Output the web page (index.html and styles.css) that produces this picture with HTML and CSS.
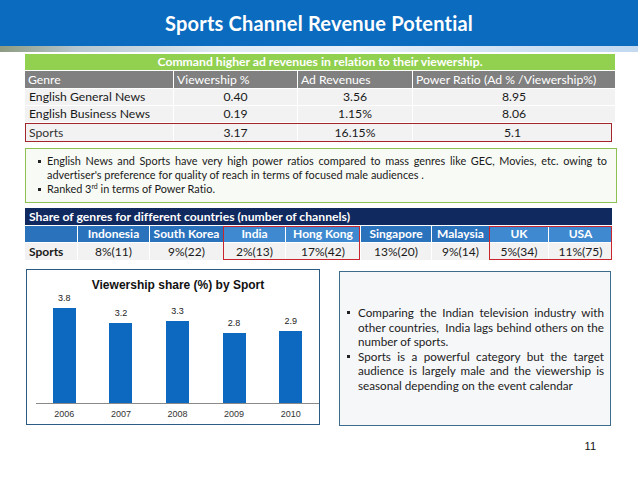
FILE: index.html
```html
<!DOCTYPE html>
<html>
<head>
<meta charset="utf-8">
<link rel="stylesheet" href="styles.css">
</head>
<body>
<header class="banner"><h1>Sports Channel Revenue Potential</h1></header>
<div class="strip"></div>
<main class="content">
  <section class="t1">
    <div class="t1-cap">Command higher ad revenues in relation to their viewership.</div>
    <div class="t1-row t1-head"><div>Genre</div><div>Viewership %</div><div>Ad Revenues</div><div>Power Ratio (Ad % /Viewership%)</div></div>
    <div class="t1-row"><div class="l">English General News</div><div>0.40</div><div>3.56</div><div>8.95</div></div>
    <div class="t1-row"><div class="l">English Business News</div><div>0.19</div><div>1.15%</div><div>8.06</div></div>
    <div class="t1-row hl"><div class="l">Sports</div><div>3.17</div><div>16.15%</div><div>5.1</div></div>
  </section>

  <section class="notes">
    <ul>
      <li>English News and Sports have very high power ratios compared to mass genres like GEC, Movies, etc. owing to advertiser's preference for quality of reach in terms of focused male audiences .</li>
      <li>Ranked 3<sup>rd</sup> in terms of Power Ratio.</li>
    </ul>
  </section>

  <section class="t2">
    <div class="t2-cap">Share of genres for different countries (number of channels)</div>
    <div class="t2-body">
      <div class="grp"><div class="col w-lab"><div class="h"></div><div class="d lab">Sports</div></div></div>
      <div class="grp"><div class="col w-ind"><div class="h">Indonesia</div><div class="d">8%(11)</div></div></div>
      <div class="grp"><div class="col w-kor"><div class="h">South Korea</div><div class="d">9%(22)</div></div></div>
      <div class="grp mark">
        <div class="col w-india"><div class="h">India</div><div class="d">2%(13)</div></div>
        <div class="col w-hk"><div class="h">Hong Kong</div><div class="d">17%(42)</div></div>
      </div>
      <div class="grp"><div class="col w-sg"><div class="h">Singapore</div><div class="d">13%(20)</div></div></div>
      <div class="grp"><div class="col w-my"><div class="h">Malaysia</div><div class="d">9%(14)</div></div></div>
      <div class="grp mark">
        <div class="col w-uk"><div class="h">UK</div><div class="d">5%(34)</div></div>
        <div class="col w-usa"><div class="h">USA</div><div class="d">11%(75)</div></div>
      </div>
    </div>
  </section>

  <section class="bottom">
    <div class="chart">
      <div class="chart-title">Viewership share (%) by Sport</div>
      <div class="plot">
        <div class="bcol"><span class="val">3.8</span><div class="bar" style="height:95px"></div></div>
        <div class="bcol"><span class="val">3.2</span><div class="bar" style="height:80px"></div></div>
        <div class="bcol"><span class="val">3.3</span><div class="bar" style="height:82.5px"></div></div>
        <div class="bcol"><span class="val">2.8</span><div class="bar" style="height:70px"></div></div>
        <div class="bcol"><span class="val">2.9</span><div class="bar" style="height:72.5px"></div></div>
      </div>
      <div class="years"><span>2006</span><span>2007</span><span>2008</span><span>2009</span><span>2010</span></div>
    </div>
    <div class="note2">
      <ul>
        <li>Comparing the Indian television industry with other countries,&nbsp; India lags behind others on the number of sports.</li>
        <li>Sports is a powerful category but the target audience is largely male and the viewership is seasonal depending on the event calendar</li>
      </ul>
    </div>
  </section>
</main>
<footer class="pnum">11</footer>
</body>
</html>
```

FILE: styles.css
```css
* { box-sizing: border-box; }
html, body { margin: 0; padding: 0; }
body {
  width: 638px;
  height: 479px;
  background: #ffffff;
  font-family: Lato, "Open Sans", sans-serif;
  font-variant-ligatures: none;
  color: #1a1a1a;
  overflow: hidden;
}

.banner {
  height: 46px;
  background: #0b6cbf;
  display: flex;
  align-items: center;
  justify-content: center;
}
.banner h1 {
  margin: 0;
  color: #ffffff;
  font-size: 20px;
  font-weight: 700;
  letter-spacing: 0.2px;
}
.strip {
  height: 6px;
  background: linear-gradient(to right, #8e9b80 0%, #b5c6cf 12%, #dfeaf5 35%, #e8f0f9 55%, #cfe1f3 80%, #c3d9f0 100%);
}

.content {
  padding: 2px 23px 0 25px;
}

/* Table 1 */
.t1 { width: 590px; }
.t1-cap {
  height: 16px;
  background: #92d050;
  color: #ffffff;
  font-weight: 700;
  font-size: 12.2px;
  line-height: 16px;
  text-align: center;
}
.t1-row {
  display: grid;
  grid-template-columns: 148px 124px 115px 203px;
  margin-top: 1px;
  height: 16px;
  font-size: 12.2px;
  line-height: 16px;
}
.t1-row > div {
  background: #f2f2f2;
  text-align: center;
  border-left: 1px solid #ffffff;
  white-space: nowrap;
}
.t1-row > div:first-child { border-left: 0; }
.t1-row .l { text-align: left; padding-left: 4px; }
.t1-head { height: 17px; line-height: 17px; }
.t1-head > div {
  background: #808080;
  color: #ffffff;
  text-align: left;
  padding-left: 3px;
}
.t1-row.hl {
  height: 19px;
  line-height: 19px;
  outline: 1px solid #a3262d;
  outline-offset: -1px;
  margin-right: 3px;
  grid-template-columns: 148px 124px 115px 200px;
}
.t1-row.hl .l { color: #333333; }

/* Notes box */
.notes {
  margin-top: 6px;
  width: 592px;
  border: 1px solid #8cc152;
  background: #f8faf5;
  padding: 5px 9px 6px 12px;
}
.notes ul, .note2 ul { list-style: none; margin: 0; padding: 0; }
.notes li {
  position: relative;
  padding-left: 9px;
  font-size: 10.9px;
  line-height: 14px;
  text-align: justify;
}
.notes li::before, .note2 li::before {
  content: "";
  position: absolute;
  left: 0;
  top: 6px;
  width: 3px;
  height: 3px;
  background: #222222;
}
sup { font-size: 7px; line-height: 0; vertical-align: 4px; }

/* Table 2 */
.t2 { margin-top: 5px; width: 587px; }
.t2-cap {
  height: 17px;
  background: #10295e;
  color: #ffffff;
  font-weight: 700;
  font-size: 12.2px;
  line-height: 17px;
  padding-left: 4px;
}
.t2-body { display: flex; margin-top: 1px; }
.grp { display: flex; }
.grp.mark { outline: 1px solid #c9252d; outline-offset: -1px; }
.col { display: flex; flex-direction: column; }
.col .h {
  height: 16px;
  background: #2b72bd;
  color: #ffffff;
  font-weight: 700;
  font-size: 12px;
  line-height: 16px;
  text-align: center;
  border-left: 1px solid #ffffff;
  white-space: nowrap;
}
.grp.mark .col .h { background: #3e89d0; }
.col .d {
  height: 17px;
  margin-top: 1px;
  background: #f2f2f2;
  font-size: 12px;
  line-height: 17px;
  text-align: center;
  border-left: 1px solid #ffffff;
}
.w-lab .h, .w-lab .d { border-left: 0; }
.col .d.lab { text-align: left; font-weight: 700; padding-left: 4px; }
.w-lab { width: 52px; }
.w-ind { width: 72px; }
.w-kor { width: 74px; }
.w-india { width: 62px; }
.w-hk { width: 75px; }
.w-sg { width: 71px; }
.w-my { width: 58px; }
.w-uk { width: 59px; }
.w-usa { width: 64px; }

/* Bottom */
.bottom {
  margin-top: 9px;
  display: flex;
  align-items: flex-start;
}
.chart {
  margin-left: 1px;
  width: 294px;
  height: 156px;
  border: 1px solid #2b5c85;
  padding: 7px 0 0 9px;
  font-family: "Liberation Sans", Arial, sans-serif;
}
.chart-title {
  margin-left: -9px;
  padding-left: 10px;
  text-align: center;
  font-weight: 700;
  font-size: 12px;
  line-height: 16px;
  color: #111111;
}
.plot {
  width: 283px;
  height: 111px;
  display: flex;
  border-bottom: 1px solid #8a8a8a;
}
.bcol {
  flex: 1;
  display: flex;
  flex-direction: column;
  justify-content: flex-end;
  align-items: center;
}
.val {
  font-size: 9px;
  line-height: 11px;
  margin-bottom: 4px;
  color: #222222;
}
.bar {
  width: 23px;
  background: #0d69c0;
}
.years {
  width: 283px;
  display: flex;
  margin-top: 4px;
}
.years span {
  flex: 1;
  text-align: center;
  font-size: 9px;
  line-height: 12px;
  color: #333333;
}

.note2 {
  margin-left: 19px;
  margin-top: 2px;
  width: 272px;
  height: 155px;
  border: 1px solid #3d6c8c;
  background: #f6f7f9;
  display: flex;
  align-items: center;
  padding: 0 6px 0 7px;
}
.note2 li {
  position: relative;
  padding-left: 11px;
  font-size: 11.7px;
  line-height: 14.5px;
  text-align: justify;
  color: #222222;
}
.note2 li::before { top: 6px; }

.pnum {
  margin-top: 14px;
  text-align: right;
  padding-right: 42px;
  font-family: "Liberation Sans", Arial, sans-serif;
  font-size: 11px;
  line-height: 13px;
  color: #111111;
}
```
